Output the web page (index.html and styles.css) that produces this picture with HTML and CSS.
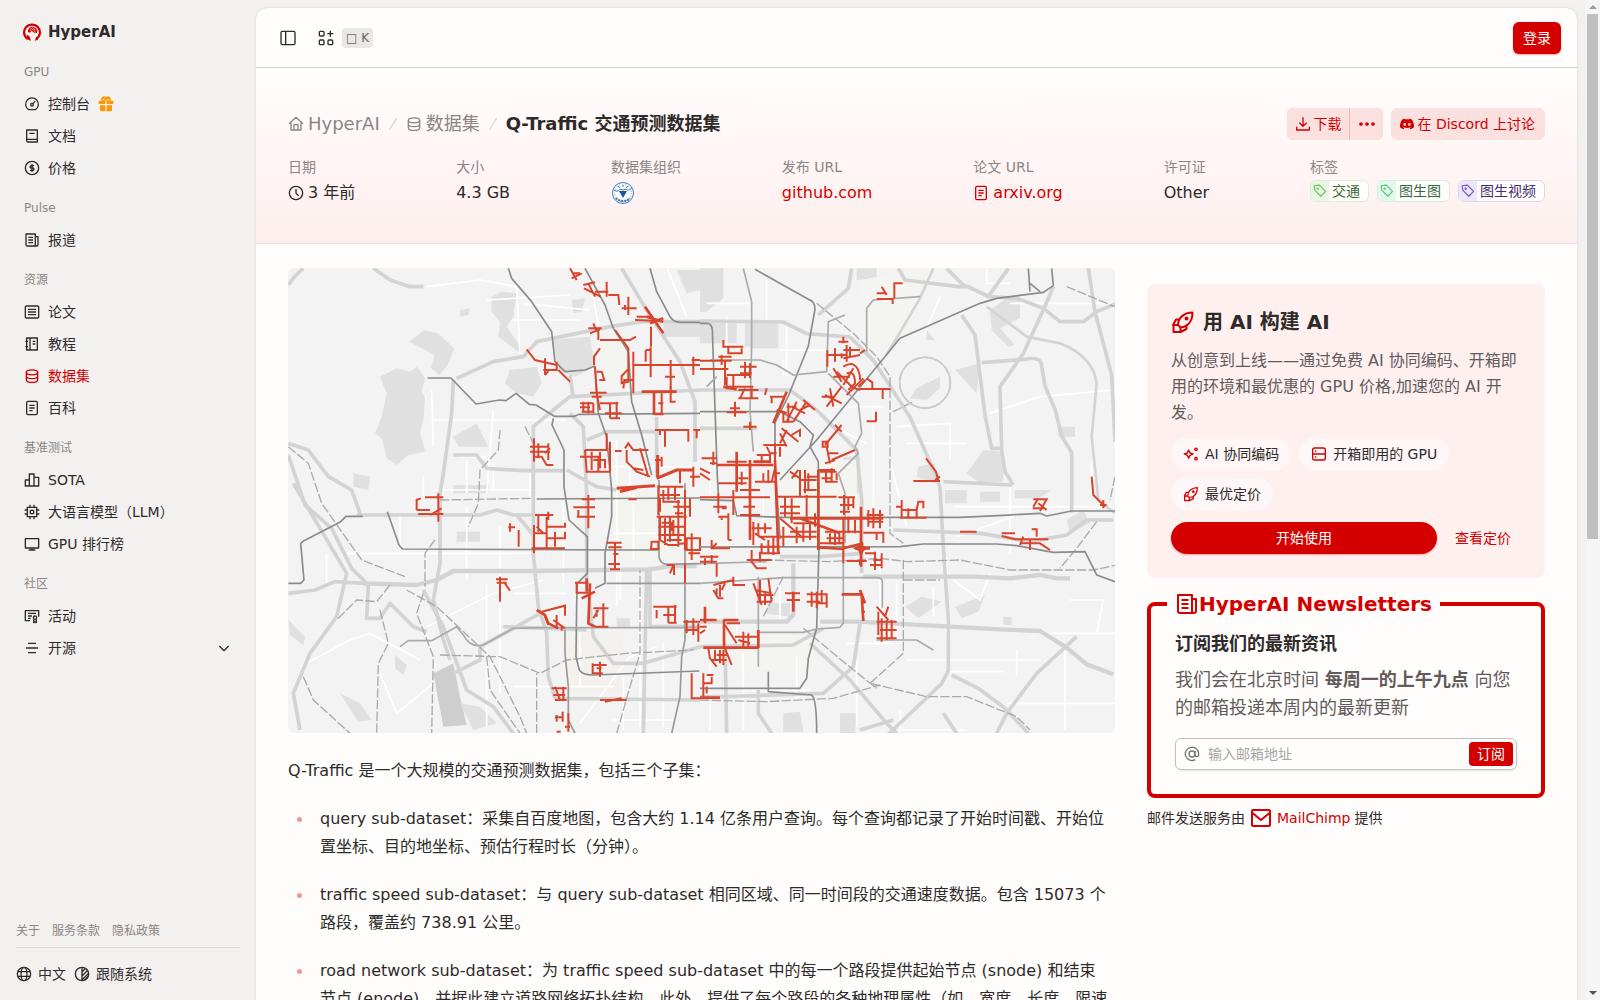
FILE: index.html
```html
<!DOCTYPE html>
<html lang="zh-CN">
<head>
<meta charset="utf-8">
<meta name="viewport" content="width=device-width, initial-scale=1">
<title>Q-Traffic 交通预测数据集 | HyperAI</title>
<link rel="stylesheet" href="styles.css">
</head>
<body>
<svg class="sprite" aria-hidden="true">
  <symbol id="i-gauge" viewBox="0 0 24 24"><path d="M7 20.500h10A9.500 9.500 0 1 0 7 20.500z"/><path d="M16.500 7.500 13.500 12"/><circle cx="12" cy="13" r="2"/></symbol>
  <symbol id="i-book" viewBox="0 0 24 24"><path d="M4 3h16v18H6a2 2 0 0 1-2-2zM4 17h16M8 8h8"/></symbol>
  <symbol id="i-dollar" viewBox="0 0 24 24"><circle cx="12" cy="12" r="10"/><path d="M15 8.500H10.500a1.800 1.800 0 0 0 0 3.500h3a1.800 1.800 0 0 1 0 3.500H9M12 6v12"/></symbol>
  <symbol id="i-news" viewBox="0 0 24 24"><path d="M19 21H5a2 2 0 0 1-2-2V3h14v18M17 7h4v12a2 2 0 0 1-4 0M6.500 8h7M6.500 12h7M6.500 16h7"/></symbol>
  <symbol id="i-article" viewBox="0 0 24 24"><rect x="2" y="3" width="20" height="18" rx="1.500"/><path d="M6 8h12M6 12h12M6 16h12"/></symbol>
  <symbol id="i-booklet" viewBox="0 0 24 24"><path d="M4 3h16v18H4zM9 3v18M13 8h4M13 12h4M2 8h4M2 16h4"/></symbol>
  <symbol id="i-db" viewBox="0 0 24 24"><ellipse cx="12" cy="6.500" rx="8.500" ry="3.800"/><path d="M3.500 6.500v11c0 2.500 4 4 8.500 4s8.500-1.500 8.500-4v-11M3.500 12c0 2.500 4 4 8.500 4s8.500-1.500 8.500-4"/></symbol>
  <symbol id="i-file" viewBox="0 0 24 24"><rect x="4" y="2" width="16" height="20" rx="2"/><path d="M8 8h8M8 12h8M8 16h5"/></symbol>
  <symbol id="i-bars" viewBox="0 0 24 24"><path d="M2 12h6v9H2zM8 3h7v18H8zM15 8h7v13h-7z"/></symbol>
  <symbol id="i-cpu" viewBox="0 0 24 24"><path d="M5 5h14v14H5zM9.500 9.500h5v5h-5zM9 1v4M15 1v4M9 19v4M15 19v4M1 9h4M1 15h4M19 9h4M19 15h4"/></symbol>
  <symbol id="i-screen" viewBox="0 0 24 24"><path d="M2 4h20v14H2zM12 18v3M7 21h10"/></symbol>
  <symbol id="i-board" viewBox="0 0 24 24"><path d="M9 19H2V4h20v9M6 8h12M6 12h6M6 15.500h4"/><circle cx="16.500" cy="14.500" r="2.500"/><path d="M14.500 17v5l2-1.200 2 1.200v-5"/></symbol>
  <symbol id="i-menu" viewBox="0 0 24 24"><path d="M6 5h12M3 12h18M6 19h12"/></symbol>
  <symbol id="i-chev" viewBox="0 0 24 24"><path d="m5 9 7 7 7-7"/></symbol>
  <symbol id="i-globe" viewBox="0 0 24 24"><circle cx="12" cy="12" r="10"/><ellipse cx="12" cy="12" rx="4.500" ry="10"/><path d="M3 8.500h18M3 15.500h18"/></symbol>
  <symbol id="i-contrast" viewBox="0 0 24 24"><circle cx="12" cy="12" r="10"/><path d="M12 2v20M12 9l5.500-5.500M12 15l9-9M12 21l10-10M16 21l5-5"/></symbol>
  <symbol id="i-home" viewBox="0 0 24 24"><path d="M1.500 11.500 12 2l10.500 9.500M4.500 10v11h15V10M9 21v-8h6v8"/></symbol>
  <symbol id="i-clock" viewBox="0 0 24 24"><circle cx="12" cy="12" r="10"/><path d="M12 6v6.500l4 3.500"/></symbol>
  <symbol id="i-slash" viewBox="0 0 24 24"><path d="M7 20 17 4"/></symbol>
  <symbol id="i-tag" viewBox="0 0 24 24"><path d="m11 2 10.500 10.500L13.500 21 3 10.500 2 3z"/><circle cx="8" cy="8" r="1"/></symbol>
  <symbol id="i-rocket" viewBox="0 0 24 24"><path d="M7 15C7 8 13 2.500 21.500 2.500 21.500 11 17 16.500 9.500 17.500zM8 9.500H5L2 15l5 0M9.500 17.500V22l6-3v-4M2.500 15v7H9"/><circle cx="15.500" cy="8.500" r="1"/></symbol>
  <symbol id="i-spark" viewBox="0 0 24 24"><path d="m8.500 6 2 4.500 4.500 1.500-4.500 2-2 4.500-2-4.500L2 12l4.500-1.500z"/><circle cx="19.500" cy="5" r="1.800"/><circle cx="19.500" cy="19" r="1.800"/></symbol>
  <symbol id="i-server" viewBox="0 0 24 24"><rect x="2.500" y="3" width="19" height="18" rx="3"/><path d="M2.500 12h19M6 7.500h2M6 16.500h2"/></symbol>
  <symbol id="i-mail" viewBox="0 0 24 24"><rect x="3" y="4" width="18" height="16" rx="1"/><path d="m3.500 7 8.500 7 8.500-7"/></symbol>
  <symbol id="i-at" viewBox="0 0 24 24"><circle cx="12" cy="12" r="4.500"/><path d="M16.500 7.500V13c0 4 5.500 4 5.500-1A10 10 0 1 0 17 20.500"/></symbol>
  <symbol id="i-panel" viewBox="0 0 24 24"><rect x="1.500" y="2" width="21" height="20" rx="2"/><path d="M8.500 2v20"/></symbol>
  <symbol id="i-apps" viewBox="0 0 24 24"><rect x="2" y="2" width="7" height="7" rx="1.500"/><rect x="2" y="15" width="7" height="7" rx="1.500"/><rect x="15" y="15" width="7" height="7" rx="1.500"/><path d="M18.500 1v9M14 5.500h9"/></symbol>
  <symbol id="i-down" viewBox="0 0 24 24"><path d="M12 2v13M6.500 10l5.500 5.500 5.500-5.500M2.500 16v5h19v-5"/></symbol>
  <symbol id="i-discord" viewBox="0 0 24 24"><path stroke="none" fill="currentColor" fill-rule="evenodd" d="M19.300 5.340C17.930 4.710 16.480 4.250 14.960 4c-.19.330-.4.770-.55 1.120-1.610-.23-3.220-.23-4.810 0C9.450 4.770 9.230 4.330 9.050 4 7.520 4.250 6.070 4.710 4.710 5.340 1.960 9.390 1.220 13.350 1.590 17.250c1.820 1.330 3.590 2.130 5.320 2.670.42-.57.8-1.190 1.130-1.840-.62-.23-1.220-.52-1.790-.86.15-.1.290-.22.430-.34 3.460 1.580 7.210 1.580 10.630 0 .15.120.290.240.430.340-.57.340-1.170.63-1.790.86.330.65.71 1.270 1.140 1.840 1.730-.53 3.500-1.340 5.310-2.670.46-4.520-.72-8.440-3.100-11.910ZM8.520 14.850c-1.040 0-1.890-.95-1.890-2.110s.83-2.100 1.890-2.100 1.910.94 1.890 2.100c0 1.160-.84 2.110-1.890 2.110Zm6.970 0c-1.040 0-1.890-.95-1.890-2.110s.83-2.100 1.890-2.100 1.910.94 1.890 2.100c0 1.160-.83 2.110-1.890 2.110Z"/></symbol>
</svg>

<div class="app">
  <aside class="sidebar">
    <a class="brand" href="#">
      <svg class="brand-logo" viewBox="0 0 24 24"><path fill="none" stroke="#d40000" stroke-width="3" d="M6.500 21.500A10.500 10.500 0 1 1 17.500 21.500"/><path fill="#d40000" d="M6.500 12c0-5 4-8 8-6.500 4 1 5 4.500 4 8l-2-1-2 .5-3-3-2 3z"/><path fill="#d40000" d="M5 16l3 1 2 4v3L5 21zM19 18l-2 2-1 4 4-2z"/><path fill="none" stroke="#f3f1f0" stroke-width="1" d="M10 7c2 0 4 2 6 5M13 6l4 4M9 10l2-1"/></svg>
      <span>HyperAI</span>
    </a>
    <nav class="nav">
      <section class="group"><h2>GPU</h2>
        <a href="#"><svg class="ic"><use href="#i-gauge"/></svg>控制台
          <svg class="gift" viewBox="0 0 24 24"><path fill="#ff9800" d="M1 7h4.500A4 4 0 0 1 12 2.300 4 4 0 0 1 18.500 7H23v5H1zM3 14h8v9H5a2 2 0 0 1-2-2zM13 14h8v7a2 2 0 0 1-2 2h-6z"/><path stroke="#f3f1f0" stroke-width="2" d="M12 7v5M7.500 5.500H10M14 5.500h2.500"/></svg></a>
        <a href="#"><svg class="ic"><use href="#i-book"/></svg>文档</a>
        <a href="#"><svg class="ic"><use href="#i-dollar"/></svg>价格</a>
      </section>
      <section class="group"><h2>Pulse</h2>
        <a href="#"><svg class="ic"><use href="#i-news"/></svg>报道</a>
      </section>
      <section class="group"><h2>资源</h2>
        <a href="#"><svg class="ic"><use href="#i-article"/></svg>论文</a>
        <a href="#"><svg class="ic"><use href="#i-booklet"/></svg>教程</a>
        <a href="#" class="active"><svg class="ic"><use href="#i-db"/></svg>数据集</a>
        <a href="#"><svg class="ic"><use href="#i-file"/></svg>百科</a>
      </section>
      <section class="group"><h2>基准测试</h2>
        <a href="#"><svg class="ic"><use href="#i-bars"/></svg>SOTA</a>
        <a href="#"><svg class="ic"><use href="#i-cpu"/></svg>大语言模型（LLM）</a>
        <a href="#"><svg class="ic"><use href="#i-screen"/></svg>GPU 排行榜</a>
      </section>
      <section class="group"><h2>社区</h2>
        <a href="#"><svg class="ic"><use href="#i-board"/></svg>活动</a>
        <a href="#"><svg class="ic"><use href="#i-menu"/></svg>开源<svg class="ic chev"><use href="#i-chev"/></svg></a>
      </section>
    </nav>
    <footer class="side-foot">
      <div class="legal"><a href="#">关于</a><a href="#">服务条款</a><a href="#">隐私政策</a></div>
      <div class="prefs">
        <button type="button"><svg class="ic"><use href="#i-globe"/></svg>中文</button>
        <button type="button"><svg class="ic"><use href="#i-contrast"/></svg>跟随系统</button>
      </div>
    </footer>
  </aside>

  <main class="panel">
    <header class="topbar">
      <button type="button" class="plain" aria-label="侧边栏"><svg class="ic"><use href="#i-panel"/></svg></button>
      <button type="button" class="plain" aria-label="快捷命令"><svg class="ic"><use href="#i-apps"/></svg><kbd>□ K</kbd></button>
      <button type="button" class="primary login">登录</button>
    </header>

    <section class="hero">
      <div class="hero-top">
        <nav class="crumbs">
          <a href="#"><svg class="ic"><use href="#i-home"/></svg>HyperAI</a>
          <svg class="slash"><use href="#i-slash"/></svg>
          <a href="#"><svg class="ic"><use href="#i-db"/></svg>数据集</a>
          <svg class="slash"><use href="#i-slash"/></svg>
          <h1>Q-Traffic 交通预测数据集</h1>
        </nav>
        <div class="actions">
          <div class="split">
            <button type="button" class="soft"><svg class="ic"><use href="#i-down"/></svg>下载</button>
            <button type="button" class="soft more" aria-label="更多"><svg class="ic" viewBox="0 0 24 24"><g fill="currentColor" stroke="none"><circle cx="3" cy="12" r="2.800"/><circle cx="12" cy="12" r="2.800"/><circle cx="21" cy="12" r="2.800"/></g></svg></button>
          </div>
          <a class="soft discord" href="#"><svg class="ic"><use href="#i-discord"/></svg>在 Discord 上讨论</a>
        </div>
      </div>
      <dl class="meta">
        <div><dt>日期</dt><dd><svg class="ic"><use href="#i-clock"/></svg>3 年前</dd></div>
        <div><dt>大小</dt><dd>4.3 GB</dd></div>
        <div><dt>数据集组织</dt><dd><svg class="org" viewBox="0 0 24 24"><circle cx="12" cy="12" r="10.500" fill="#fff" stroke="#3f79bd" stroke-width="1"/><circle cx="12" cy="12" r="8.500" fill="none" stroke="#a5c2e2" stroke-width="1.500" stroke-dasharray="1 2"/><path fill="#1458a8" d="M8 10h8l-4 7z"/><path d="M3 9c3 2 5 1 6-1l3 1 3-1c2 2 4 1 6-1M7 5l2 2M17 5l-2 2M12 4v2" fill="none" stroke="#3a75ba"/><path d="M5 17c3 4 11 4 14 0" fill="none" stroke="#3a75ba" stroke-width="2" stroke-dasharray="2 1"/></svg></dd></div>
        <div><dt>发布 URL</dt><dd><a href="#">github.com</a></dd></div>
        <div><dt>论文 URL</dt><dd><a href="#"><svg class="ic"><use href="#i-file"/></svg>arxiv.org</a></dd></div>
        <div><dt>许可证</dt><dd>Other</dd></div>
        <div><dt>标签</dt><dd class="tags">
          <a class="tag lime" href="#"><span><svg class="ic"><use href="#i-tag"/></svg></span>交通</a>
          <a class="tag green" href="#"><span><svg class="ic"><use href="#i-tag"/></svg></span>图生图</a>
          <a class="tag violet" href="#"><span><svg class="ic"><use href="#i-tag"/></svg></span>图生视频</a>
        </dd></div>
      </dl>
    </section>

    <div class="content">
      <article class="prose">
        <svg class="map" viewBox="0 0 827 465" preserveAspectRatio="xMidYMid slice" role="img" aria-label="北京路网地图">
          <rect width="827" height="465" fill="#f3f3f3"/>
          <!-- western half -->
          <g transform="translate(-8 -8) scale(.33333)">
            <g fill="#e0e0e0">
              <path d="M300 350l50-25 40 10 20-15 25 35-10 40 10 20-5 70-10 30 15 60-50 10-35 30-30-20-15-60-20-15 20-50 15-70z"/><path d="M388 245l45-35 40 10 50 45-20 50-25 30-25-20 10-40z"/><path d="M635 110l30-15 45 5-10 70-20 30 45 65-10 10-60-45 5-45-25-30z"/><path d="M690 330l80-10 15 50-25 40-50-10-35-30z"/><path d="M820 240l110-10 15 90-60 30-50-20z"/><path d="M520 530l70-40 35 70-90 0z"/><path d="M220 640l50 10-5 40-45-10z"/><path d="M540 150l30-5-5 20-25 5z"/><path d="M1190 30h70v60l-40 10z"/><path d="M180 1300l60 30 35 50-40 5z"/><path d="M25 1080l50 50-5 25-40-30zM520 675h105v25H520zM530 815h70v30H530zM345 1185l35 30-10 30-25-20z"/>
              <path fill="#cecece" d="M460 1240l60-30 20 100 20 85-70 5z"/><path d="M540 1330l60 10 50 50-70 20zM875 120l40-5-10 40-25 5zM1150 190h110v40h-110zM1010 1075h40v25h-40z"/>
            </g>
            <g fill="#f3f1ed"><path d="M850 1120h180v180H865z"/><path fill="#f3f4ef" d="M1000 700h250v200h-250zM960 240h80v120h-80z"/></g>
            <g fill="none" stroke="#fff" stroke-width="5"><path d="M440 80l160-20 110 20 10 200M460 480h400M455 390l5 170M540 590h80M620 120l250-15M640 450l-20 250M200 880h560M620 970v430M440 1100l200-100 150-40M430 650v60M560 740v220M660 800v500M700 1280h300M980 620h260M1010 540v500M1060 700v200M1000 820h130M850 720v250M1080 1000v400M60 1220l150-80 60-20 150 80M300 1240l50 120 110-90M700 1000h160M140 880v90M360 760v100M900 1390l150-200 80-30M1160 20l60 150M930 60l30 160M1050 600v100M730 130l200 20M700 180h200M640 600v90M560 600v100M1020 900v120M900 1100v180M1150 1150v250M1030 1240v170M1000 1380h180M750 640v80M460 690h300"/></g>
            <g fill="none" stroke="#d3d3d3" stroke-width="11" stroke-linejoin="round"><path d="M25 75q20-30 45-50M280 25l50 35 60 20h40"/><path d="M530 355l110-50 90-15 40-45 220-45 100-15h210"/><path d="M520 360l-5 100-25 180-10 60v210l-20 110 30 120 20 60"/><path d="M25 550l60 20 60 80 70 40 25 70M230 765h370l50-15 50 15h70"/><path stroke-width="13" d="M250 970l160 5 60-15 50-27h240l350-5 60-10h80"/><path d="M25 585l50 150 80 70 60 120 50 50-5 100 40 0 30-45 70 70 40 15"/><path d="M40 670l160 270-30 130-80 110-50 120 20 110"/><path d="M760 880V500l60-50 50-40 390-20M870 460l40 40 10 200v250l20 180 60 80h90l170-50"/><path d="M760 880l15 160 25 80 5 130 20 65 435 5M1100 930l-10 490M1110 920v180h150"/><path d="M1025 25l90 150 85 130 45 120 0 180"/><path d="M520 585h70l30 40 110 7h120M860 630l90 50 60 10M920 540l60-25h160M1130 470v180"/><path d="M780 1060l-70 40-110 60 0 40-80 40M430 990l60 110 70 190 80 50 60 80"/><path d="M870 345l10 70M710 765l50 60M670 1100l250 10M25 1000l80-10 60-25 90 5"/></g>
            <g fill="none" stroke="#aaa" stroke-width="4" stroke-dasharray="28 7"><path d="M25 560l60 50 40 120 120 170 130 50M380 990l90 50 160 150 90 180 20 50M660 510l-5 60-55 60-5 100-30 70M480 720l280-5M465 840l-30 40v100M480 1185l180 5 120 50 80-40 180-20 200-10M770 1420V1240M300 1050l25 100-30 60-5 210M430 1000l-20 60 50 130-5 230M70 1250l30 70 110 100M1010 1420l40-140 30-100V930M330 975l-40 50-60-5-60 60M735 500l30 60M620 1190l10 100 90 130"/></g>
            <g fill="none" stroke="#8b8b8b" stroke-width="5" stroke-linejoin="round"><path d="M685 25l10 30 60 70 60 90 10 90 30 30 60-5 30-12"/><path d="M443 354h70l75 78 70-12 20 2 30-22 40 33 20 2 55 34h60l15-6 362-3"/><path d="M820 475l-4 20 36 75v110l15 100 55 50v110l-30 30-2 60-2 160 10 40q10 15 40 15l320-12"/><path d="M25 970h37l10-10-10-110 10-8 110-57 16-16h50M322 755l35 100 10 12 650 3h120"/><path d="M945 320l10 140 25 70 15 160v80l-20 110v90l-30 15"/><path d="M915 25l60 110 25 70 45 70 10 150 30 100 30 120M1110 25l20 70 40 75q10 15 30 17h60M770 717l490-3"/><path stroke="#aaa" d="M360 1160l25-18h70l75-42 20 25q20 40 60 30l90-50 80-2h480"/><path d="M1137 660v230q3 22 25 23l98-2M1215 670v470l-10 50-5 120-25 110M855 1110v70l10 100v100l20 40M980 970h280" stroke="#999"/></g>
            <g fill="none" stroke="#d8452c" stroke-width="6">
              <path d="M870 25l20 35M880 40l20 0M875 55l30-15M910 75l35-8M912 85l50 25M925 70l20 40M945 95h40M980 65v45M985 105h30l3 30M1025 145h45M1045 110v55M1035 135v15"/>
              <path stroke-width="8" d="M1095 140l55 80M1100 170l50 15M1110 190l40-15"/><path d="M1065 180l60 2M1070 170h40M1113 200v60M1097 270h18M1097 270v35M1112 262v90"/>
              <path d="M940 190l10 25M925 205h40M930 220l30-12M955 210v30M960 240h90l18-10M1005 210l40 55v100l-20 5v-22l22-23M1060 275v125M960 265l-18 25v25M1030 385l3-25h30M1060 315h200M1172 300v85M1155 350h30M1240 290v55M1235 300h25"/>
              <path d="M740 268l25 32 65 15M790 330h40v-25M795 295v50M795 345l10-12M835 330l35 35M945 320l5 80 10 50M950 335h15l8 25h-15M930 398h50M935 410h30"/>
              <path d="M900 430h40M905 455h35M910 425v30M925 425v35M940 430v30M900 442h30"/><path stroke-width="8" d="M1085 395h105M1122 395v70M1125 462h25"/><path d="M960 430h55M990 430v45M975 460h50M1010 425v50M990 475h30M1145 400v60M1135 430h15M1172 380v45h15"/>
              <path d="M762 535v70M750 560h55M750 575h60M765 590h20l15 25h20M775 550v45M805 550v50M795 580l15-15M915 570h65v-50M915 570l5 65h70v-90M920 590h35v45M935 575v55M940 600h35v25M960 575v50M900 590h15"/>
              <path d="M1005 573h20M1035 565l10-15 15 20h45M1040 570v35l30 30 40 15M1080 565l25 85M1125 510h100v35M1155 510v50M1140 510v15M1240 510h20M1250 510v25M1060 625l30 5"/>
              <path stroke-width="9" d="M1133 585v65M1010 685l115-8M1130 655l60-25h50M1020 695l50-12"/><path d="M1145 590v30M1125 600h20M1135 675v90M1135 680h75M1150 690v35h50M1165 680v40M1185 680v40M1140 705h60M1200 630v40M1240 620v60M1230 650h30"/>
              <path d="M1130 770h90M1140 770v70l25 15 50-5M1155 775v80M1170 770v75M1195 720v140M1135 800h80M1135 825h80M1215 690v180M1230 715v55M1180 740h50M1140 715v40M1185 760h25M1145 788h30v25M1180 780v45M1160 840h45"/><path d="M1115 845h20v22h-22zM1220 835h40v35h-40zM1235 820v80M1160 915h20l-10 25M1182 915v30M1215 910v60M1225 880h35"/>
              <path d="M410 750v-30l12-5M410 750h40M435 712h55M475 700v85M415 762h75M450 765l35-20M690 790v25M685 802h20M716 810v50"/>
              <path d="M765 765h55M762 795v85M775 765v50M800 770v95M760 820h40M755 865h100M805 755v25M800 800h55v-12M800 835h55v-20M825 815v45M770 800l20 20M880 742h65M890 770h55M925 705v100M905 718h40M895 750v20M1045 718h25"/>
              <path d="M648 958h35M650 968h30M660 950v75M675 970l15 22M980 848h45M1005 848v80M985 862h40M1000 882h15M985 912h35M990 928h30"/>
              <path stroke-width="8" d="M920 955v40M930 970l-5 120 20 10M905 1015l40-20M770 1050l25 15 10 25 30 15"/><path d="M885 968h40M890 970v28h35M785 1055l70-18v30M940 1045h45M970 1030v70M945 1100h40M940 1075l15-25M950 1050v20M795 1070l10 25M830 1065v40M820 1080l35 25M845 1100v12M1120 1040h70M1185 1035v55M1130 1050v25M1165 1040v48M1150 1065h35M1165 1088h25M1210 1085h50M1220 1080v40M1215 1110h40M1240 1075v50M1255 1090v55"/>
              <path d="M935 1215h45M938 1210v30h30M960 1205v45M950 1225h15M1235 1240v75h25M960 1320h80M975 1325l50-10M815 1285h45M825 1280l15 40M820 1305h35M850 1280v40M825 1320h35M830 1365v20M825 1372h20M848 1355v30M865 1360v55M855 1400h15M830 1415h12"/>
            </g>
          </g>
          <!-- eastern half -->
          <g transform="translate(412 -8) scale(.33333)">
            <g fill="#e0e0e0"><path d="M0 25h70v90l-50 40H0zM0 190h110v60H0zM135 185h100v80H135zM870 150l50-35h40v60l-60 30 45 50-20 5-50-50zM765 330l75-20-10 90zM800 640l50-70 60 5v90l-70 5zM655 620l50-10v60l-55-20zM430 590h50v110h-50zM650 385l70-35v35l-40 35-50-5zM945 690l110 0-40 25h-70zM735 690h65v40h-65zM840 695h60v30h-60zM1075 500h50v30h-50zM765 1040l90-35-20 50-50 20zM615 1040l50-30 60 15-70 50zM420 1360h50l-5 60h-45zM470 25h60v35h-60zM680 210l25 30h-25zM250 1360l50-5 10 60h-60zM1100 780l50-30 20 40-60 30zM190 1060l80 10v-40h-60zM910 1070h25v25h-25z"/></g>
            <g fill="#f4f5f1"><path d="M0 260h150v320H0zM250 600h220v260H250zM480 60l200-35-80 200-100 50zM30 780h60v90H30zM120 1120h200v110H120z"/></g>
            <g fill="none" stroke="#fff" stroke-width="5"><path d="M80 170v100M240 270h150M250 300v50M590 500l160-10v110M620 550h180M570 600l50 200M870 460l150-50 220-20M930 680v200M760 740h480M740 890v250M620 1200h400M750 1235h160M950 1170v80M920 1330h325M1095 1170v240M870 940l-30 80-80-60M1050 1120h200M1110 1020h100l-20 100M860 20v50h70M930 130h310M590 960v180M440 1150h140M290 1190v130M130 1290h200M190 700v200M30 620v80M400 440h150M520 450v350M600 1350v60l200 0M470 1200v200M60 860h250M110 950v200M240 950v140M1175 600v90M770 830l170-60M720 110l-50 120M30 1180v230M130 1180v230M20 130h130M200 60v120M260 200v150M540 880v200M420 510l80 40M700 980v90"/></g>
            <g fill="none" stroke="#d3d3d3" stroke-width="11" stroke-linejoin="round"><path d="M0 183l250 3 70 35 130 10 70 70 110 170 80 180 10 30 10 180 15 220v150l-20 40-190 180-80 40"/><path d="M455 25l-10 60-90 80M595 25l20 35 160 20h30l60 30 60-85M740 25l50 50 80 35 80 5 80 30 50 40h70l40-30 60-25"/><path d="M1060 80l-30 70-60 130-70 100 5 190 10 65 25 40M730 665l205 10M785 165l40 60 30 240 20 100h30M1165 25l20 130 50 190 10 200M845 308l130-10q50-10 50 20l10 60 30 70 20 80 30 50v180"/><path stroke-width="8" d="M860 140l120 90 100 20q100 40 110 120l-15 160 20 190 50 40M700 25l-40 90-100 170"/><path d="M0 390h270l80 60 60 60 60 60 15 150v220M0 505h170"/><path stroke-width="13" d="M490 950h330l110 5 90-10 50 10h40M0 1085l260 0 20-20V910M360 1085h120l270 15 150 8 120 5 80 50 60 50 80 30"/><path d="M580 810l260 10 150 25 110-20 60-45h80M1130 1130l-120 110-90 120-30 60M755 1245l80 40 80 60 70 75M330 1150l120 110 110 130 30 30M240 890l120 0 130-10M480 1090l-20 130-90 80-290 10H0M175 1290v70l40 60M75 1150l5 270M0 1160l280-5 90-50M730 1360l40 60M480 1410l100-30"/></g>
            <g fill="none" stroke="#aaa" stroke-width="4" stroke-dasharray="28 7"><circle cx="675" cy="368" r="76"/><path d="M350 130l110 90 70 70 40 60v470l40 30M190 900l200 5 150-10 80 10 160-5 150 30h250l70-15M610 900v280l-100 90 170 40 120 0 150 60 40 40M310 1105l120 100 100 80M1100 80l145 60M1190 785l-60 80-50 60M610 960h110M580 455l60-30M0 1320l200 5 200-10 140-40M250 950l-60 120M1245 650l-15 70"/></g>
            <circle cx="675" cy="368" r="76" fill="none" stroke="#ccc" stroke-width="5"/>
            <g fill="none" stroke="#8b8b8b" stroke-width="5" stroke-linejoin="round"><path d="M1245 753h-130l-75 15-20-8-110 6-130 6H250l-140-5-10-45-100-3"/><path d="M0 861l600-1 70-8h220l60 5 110 20 95-2 35 70 55 20"/><path d="M165 28l160 90q20 5 20 30l-20 110-60 150-40 80 0 120 15 230M0 190h20q15 0 17 20l15 440 3 50"/><path d="M240 660l110-120 250-305 240-105 50-15 140-18 30-20-5-52M985 25l5 70M990 70l30 25M0 455h240l60 30 40 40-10 35 25 45 2 260-7 240-25 90-5 60-20 30H0M205 1235v60l130 10q15 10 15 115"/><path stroke="#aaa" d="M130 25l25 100 0 130-5 200 10 120M30 300h150l50 15 50 30 100-10 5-150 50-20M0 970l250-17h280q15 0 17 10v80M430 860v230l-10 12-70 5-40 10H170M175 950v270M385 340l90 90 10 90-20 40 10 20-60 60 20 60v150M500 275v-130l20-25 140-10M530 1140h120l50 30M20 380l30-30M0 911l200-6"/></g>
            <g fill="none" stroke="#d8452c" stroke-width="6">
              <path d="M583 115V70h25M545 80l15 25M530 100h30M530 117h48v15M70 240v20h60M85 260v20h40v-15M55 290h40M65 285v30M0 302h95M0 327h85M75 305v70M80 345h70M80 380h80M80 350v35h20v-40M120 320h50M120 340h35M135 305v50M150 310v45"/>
              <path d="M115 390h60M115 415h60M120 415l15-30M155 385v30M80 457h60M105 425v45M90 445h30M130 500h40M150 485v25M200 385l-5 20M210 410h45M215 410v20"/>
              <path stroke-width="8" d="M260 395l-40 95M230 450l30 10M70 380l40 8"/><path d="M260 440h30M250 460v25h30M290 425l-30 60M265 430v55M320 425l-40 60M275 440l40 20M310 420l35 30M300 450l30-15M245 505l50 40M240 520l20 40M260 510l-20 40M275 525l25-15v20M190 555h70M225 550v60M200 560l10 20h20M240 560v30"/>
              <path stroke-width="8" d="M50 615h170M110 575v120M150 600v240M160 605h50"/><path d="M5 595h45M40 575v40M30 610h20M170 585h40v25M185 585v25M80 605h60M0 625l30 15M0 640l30 20"/><path d="M55 670h85M125 635v40M115 655h30M190 640v25h35M165 665h65M205 630v40M0 712h210M40 740h40M55 700v60M65 745h15M120 690h60M130 740h35M120 765h60M85 760v80M55 770h30M65 770v10M35 840v25h55M100 690v75M35 865l15-15M85 840h10"/>
              <path d="M430 230v20M415 245h30M380 285h60M382 270v50M405 265v40M440 255v50M430 270h50M450 260v30M480 280l15-10M430 295l50-10M425 280v15"/>
              <path d="M400 325l25 40M400 350h50M410 335l50 50M430 320q40-25 50 30v10M425 350l30 30M440 405l50-50M450 380l30 10M430 375l30-50M375 405l50 25M380 440l45-60M365 410h40M390 385l10 55M440 340q25-10 25 30l-20 20"/><path d="M500 355l17 12v20h55M480 387h60M548 387v30M475 380l20-20M528 455v28M500 484h30M375 555l50-60M405 495l20 20M368 545h15v15h-15zM380 560l10 50M385 580h30M395 600l70-30M375 610l30-10M360 635h50M378 630v35h35M395 625v40M410 640v20M365 655h30"/>
              <path stroke-width="8" d="M225 600l10 280M355 630v240M270 775h280M300 775l120 45"/><path d="M220 640h20M225 710h185M240 740h60M240 775l70 60M215 665l10-40"/><path d="M270 635l30 20M275 655l20-25M300 630v80M315 630v70M300 660h50M325 640v50M310 690h40M320 705v65M255 710v60M275 715v75M240 760h60M280 790h70M250 800v60M270 815h80M280 830h60M330 790v50M345 760v40M240 830h110M320 650h35M290 800v50M310 790v55"/>
              <path d="M155 805h60M160 785v70M175 830h60M175 790v35M195 790v30M165 820l30 20M180 860h60M185 850v30M205 840v40M180 880h60M220 830v55M155 870v40M140 900h75M155 905l15 20h30M0 890h55M15 895v20M35 885v25M50 910v40M180 905v-30M0 905h50"/>
              <path stroke-width="8" d="M483 740v180M465 865h45M430 865l60-15M355 862l75 5"/><path d="M375 815h110M360 850h70"/><path fill="#d8452c" stroke="none" d="M483 840l8 18 17 7-17 7-8 18-8-18-17-7 17-7z"/><path d="M390 820v30h40v-40M405 815v40M418 815v35M380 835h50M430 770v100M445 770v50M465 780v40M415 712h50M432 705v60M445 710v40M460 710v35M420 735h40M420 755h30M505 750v50M520 745v60M540 750v55M500 765h50M505 785h45M490 818h60v30M530 820v20M430 870v40M440 903h60M480 900v15M525 875v55M545 880v45M520 900h25M510 915h35M495 880h30M355 630h50"/>
              <path d="M588 740h20M605 720v50M600 773h80M625 745v30M605 750h45l5-25h15v20M650 745v30M640 663h80M678 595l30 40 8 30M705 660l15-10M780 815h50M905 820h40M905 828l40 10h100M1010 830v-22h-15M970 830l-10 25M960 850h60l30 20M990 840v30M1175 650l5 55 35 35M1210 720v25M1200 735h20M1000 718h40l-20 35M1000 740l15-25M1015 730l25 20M998 745h35"/>
              <path stroke-width="8" d="M280 995v60M425 1003h60l5 80M480 990l15 40M0 1080h50M15 1040v50"/><path d="M40 975l60-15M40 990l15 25h15M255 1000h45M100 950v25h35M50 985v25M60 970v40M75 970l-10 20M160 970l25 65M165 990l50 10M170 1005h50M170 1025h45M180 960v70M205 955l10 70M195 1000v35M260 1020h40M320 1003h60v40M320 1025h40M335 995v45M350 995v50M365 990v40M350 1030h30M485 1055h10M530 1040l35 40M535 1055v70M530 1085h60M540 1110h50M545 1075v70M560 1080v60M575 1080v55M565 1040l-10 30M530 1135h60"/>
              <path stroke-width="8" d="M10 1163h165M72 1080v85M70 1080h45M175 1110v55M0 1313h60"/><path d="M75 1095l35 55M80 1090h40M105 1130h70M130 1115v45M145 1120v40M115 1140l35 10M25 1165l5 30 20 25M45 1170v30M60 1170v40M75 1165l20 50M35 1200h45M70 1170v45M50 1185h30M10 1240v70M20 1245h20M10 1270h25v-20M20 1280v20M0 1100h20M0 1120l15-10"/>
            </g>
          </g>
        </svg>
        <p>Q-Traffic 是一个大规模的交通预测数据集，包括三个子集：</p>
        <ul>
          <li>query sub-dataset：采集自百度地图，包含大约 1.14 亿条用户查询。每个查询都记录了开始时间戳、开始位置坐标、目的地坐标、预估行程时长（分钟）。</li>
          <li>traffic speed sub-dataset：与 query sub-dataset 相同区域、同一时间段的交通速度数据。包含 15073 个路段，覆盖约 738.91 公里。</li>
          <li>road network sub-dataset：为 traffic speed sub-dataset 中的每一个路段提供起始节点 (snode) 和结束节点 (enode)，并据此建立道路网络拓扑结构。此外，提供了每个路段的各种地理属性（如，宽度、长度、限速等）。</li>
        </ul>
      </article>

      <aside class="rail">
        <section class="promo">
          <h2><svg class="ic lg"><use href="#i-rocket"/></svg>用 AI 构建 AI</h2>
          <p>从创意到上线——通过免费 AI 协同编码、开箱即用的环境和最优惠的 GPU 价格,加速您的 AI 开发。</p>
          <div class="chips">
            <span><svg class="ic"><use href="#i-spark"/></svg>AI 协同编码</span>
            <span><svg class="ic"><use href="#i-server"/></svg>开箱即用的 GPU</span>
            <span><svg class="ic"><use href="#i-rocket"/></svg>最优定价</span>
          </div>
          <div class="cta"><button type="button" class="primary">开始使用</button><a href="#">查看定价</a></div>
        </section>
        <form>
          <fieldset class="news">
            <legend><svg class="ic lg"><use href="#i-news"/></svg>HyperAI Newsletters</legend>
            <h3>订阅我们的最新资讯</h3>
            <p>我们会在北京时间 <strong>每周一的上午九点</strong> 向您的邮箱投递本周内的最新更新</p>
            <div class="mailbox">
              <label for="email" aria-label="邮箱"><svg class="ic"><use href="#i-at"/></svg></label>
              <input id="email" type="email" placeholder="输入邮箱地址">
              <button type="submit" class="primary">订阅</button>
            </div>
          </fieldset>
        </form>
        <div class="credit">邮件发送服务由<a href="#"><svg class="ic lg"><use href="#i-mail"/></svg>MailChimp</a>提供</div>
      </aside>
    </div>
  </main>

  <div class="scroll" aria-hidden="true"><i class="up"></i><div class="track"><div class="thumb"></div></div><i class="dn"></i></div>
</div>
</body>
</html>
```
FILE: styles.css
```css
:root {
  --red: #d40000;
  --ink: #2f2a2a;
  --muted: #8c8584;
  --side: #f3f1f0;
  --paper: #fffdfc;
}

* { box-sizing: border-box; }

body {
  margin: 0;
  background: var(--side);
  color: var(--ink);
  font: 14px/20px "DejaVu Sans", "Noto Sans CJK SC", sans-serif;
}

h1, h2, h3, p, ul, dl, dd, fieldset { margin: 0; padding: 0; }
a { color: inherit; text-decoration: none; }
button, input { font: inherit; color: inherit; border: 0; background: none; padding: 0; }
.sprite { position: absolute; width: 0; height: 0; }

.ic {
  flex: none;
  width: 16px;
  height: 16px;
  fill: none;
  stroke: currentColor;
  stroke-width: 2;
  stroke-linejoin: round;
}
.ic.lg { width: 24px; height: 24px; }

.app {
  display: grid;
  grid-template-columns: 256px minmax(0, 1fr) 15px;
  height: 100vh;
  overflow: hidden;
}

/* Sidebar */
.sidebar { display: flex; flex-direction: column; padding: 16px 16px 10px; }
.brand { display: flex; align-items: center; gap: 7px; height: 32px; padding-left: 7px; font-size: 15px; font-weight: 700; }
.brand-logo { width: 18px; height: 18px; }
.nav { flex: 1; }
.group { padding-top: 8px; }
.group h2 { padding-left: 8px; font-size: 12px; font-weight: 400; line-height: 32px; color: var(--muted); }
.group a { display: flex; align-items: center; gap: 8px; height: 32px; padding: 0 8px; }
.group .active { color: var(--red); }
.gift { width: 16px; height: 16px; fill: none; }
.group .chev { margin-left: auto; }
.legal { display: flex; gap: 12px; padding-bottom: 6px; border-bottom: 1px solid #dcd9d8; font-size: 12px; color: var(--muted); }
.prefs { display: flex; gap: 8px; padding-top: 10px; }
.prefs button { display: flex; align-items: center; gap: 6px; height: 32px; }

/* Main panel */
.panel {
  margin: 8px 8px 0 0;
  overflow: hidden;
  background: var(--paper);
  border-radius: 12px 12px 0 0;
  box-shadow: 0 0 3px #dccfcf;
}
.topbar { display: flex; align-items: center; height: 60px; padding: 0 16px 0 24px; border-bottom: 1px solid #d3d1d1; }
.plain { display: flex; align-items: center; gap: 8px; margin-right: 22px; }
kbd { padding: 0 4px; border-radius: 4px; background: #eae7e6; color: #6b6464; font: 12px/20px "DejaVu Sans", sans-serif; }
.primary { background: var(--red); color: #fff; border-radius: 6px; box-shadow: 0 1px 2px #d4000055; }
.login { height: 32px; padding: 0 10px; margin-left: auto; }

.hero { padding: 40px 32px 36px; border-bottom: 1px solid #ecdcdc; background: linear-gradient(#fffdfc, #fff5f4 60%, #fcefee); }
.hero-top { display: flex; align-items: center; justify-content: space-between; height: 32px; }
.crumbs { display: flex; align-items: center; gap: 4px; font-size: 18px; color: var(--muted); }
.crumbs a { display: flex; align-items: center; gap: 4px; }
.crumbs h1 { font-size: 18px; color: var(--ink); }
.slash { width: 18px; height: 18px; fill: none; stroke: #d8d2d1; stroke-width: 1.500; }
.actions { display: flex; gap: 8px; }
.split { display: flex; gap: 1px; border-radius: 6px; overflow: hidden; background: #f4b5b5; }
.soft { display: flex; align-items: center; justify-content: center; gap: 2px; height: 32px; padding: 0 8px; background: #fbe0e0; color: var(--red); }
.more { width: 33px; }
.discord { padding: 0 10px 0 8px; border-radius: 6px; }

.meta { display: flex; justify-content: space-between; padding-top: 15px; }
.meta dt { line-height: 24px; color: var(--muted); }
.meta dd { display: flex; align-items: center; height: 28px; gap: 4px; font-size: 16px; }
.meta dd a { display: flex; align-items: center; gap: 4px; color: var(--red); }
.org { width: 24px; height: 24px; }
.meta .tags { gap: 8px; height: 24px; font-size: 14px; }
.meta .tag { gap: 3px; height: 22px; padding-right: 8px; border: 1px solid; border-radius: 6px; overflow: hidden; background: var(--paper); line-height: 20px; }
.tag span { display: flex; align-items: center; height: 20px; padding: 0 2px; }
.tag .ic { width: 14px; height: 14px; }
.meta .lime { color: #3d6a33; border-color: #d9f0d3; }
.lime span { background: #e9f6e5; color: #6cc655; }
.meta .green { color: #316a41; border-color: #d2f0dc; }
.green span { background: #e5f6ea; color: #55c67a; }
.meta .violet { color: #413070; border-color: #dcd5f0; }
.violet span { background: #ece8f8; color: #7555c6; }

/* Article */
.content { display: grid; grid-template-columns: minmax(0, 1fr) 398px; gap: 32px; padding: 24px 32px; }
.prose { font-size: 16px; line-height: 28px; }
.map { display: block; width: 100%; height: auto; border-radius: 6px; margin-bottom: 24px; }
.prose ul { list-style: none; }
.prose li { position: relative; padding: 0 6px 0 32px; margin-top: 20px; }
.prose li::before { content: ""; position: absolute; left: 9px; top: 12px; width: 5px; height: 5px; border-radius: 50%; background: #f29494; }

/* Right rail */
.rail { padding-top: 16px; }
.promo { padding: 24px; border-radius: 8px; background: #fff0f0; }
.promo h2 { display: flex; align-items: center; gap: 8px; font-size: 20px; line-height: 28px; }
.promo .ic { color: var(--red); }
.promo p { margin: 12px 0; line-height: 26px; font-size: 16px; color: #635b5b; }
.chips { display: flex; flex-wrap: wrap; gap: 8px; margin-bottom: 12px; }
.chips span { display: flex; align-items: center; gap: 6px; height: 32px; padding: 0 12px; border-radius: 16px; background: #fff7f7; }
.cta { display: flex; gap: 8px; }
.cta .primary { flex: 1; height: 32px; border-radius: 16px; }
.cta a { padding: 0 10px; line-height: 32px; color: var(--red); }

.news { min-width: 0; margin-top: 12px; padding: 12px 24px 24px; border: 4px solid var(--red); border-radius: 8px; }
.news legend { display: flex; align-items: center; margin-left: -8px; padding: 0 8px; font-size: 20px; font-weight: 700; line-height: 28px; color: var(--red); }
.news h3 { font-size: 18px; line-height: 28px; }
.news p { margin: 8px 0 16px; font-size: 18px; line-height: 28px; color: #635b5b; }
.mailbox { display: flex; align-items: center; gap: 8px; height: 32px; padding: 0 3px 0 8px; border: 1px solid #c4c0c0; border-radius: 6px; box-shadow: 0 1px 2px #00000018; }
.mailbox label { display: flex; color: #7a7373; }
.mailbox input { flex: 1; min-width: 0; outline: 0; }
.mailbox input::placeholder { color: #aaa5a4; opacity: 1; }
.mailbox .primary { height: 24px; padding: 0 8px; border-radius: 4px; box-shadow: none; }
.credit { display: flex; align-items: center; gap: 4px; margin-top: 8px; line-height: 24px; }
.credit a { display: flex; align-items: center; gap: 4px; color: var(--red); }

/* Scroll bar */
.scroll { display: flex; flex-direction: column; align-items: center; justify-content: space-between; padding: 5px 2px; background: #f5f5f5; }
.track { flex: 1; width: 11px; padding: 5px 0; }
.thumb { height: 54%; background: #bfbfbf; }
.up, .dn { border: 4px solid transparent; }
.up { border-top: 0; border-bottom-color: #9b9b9b; }
.dn { border-bottom: 0; border-top-color: #555; }
```
